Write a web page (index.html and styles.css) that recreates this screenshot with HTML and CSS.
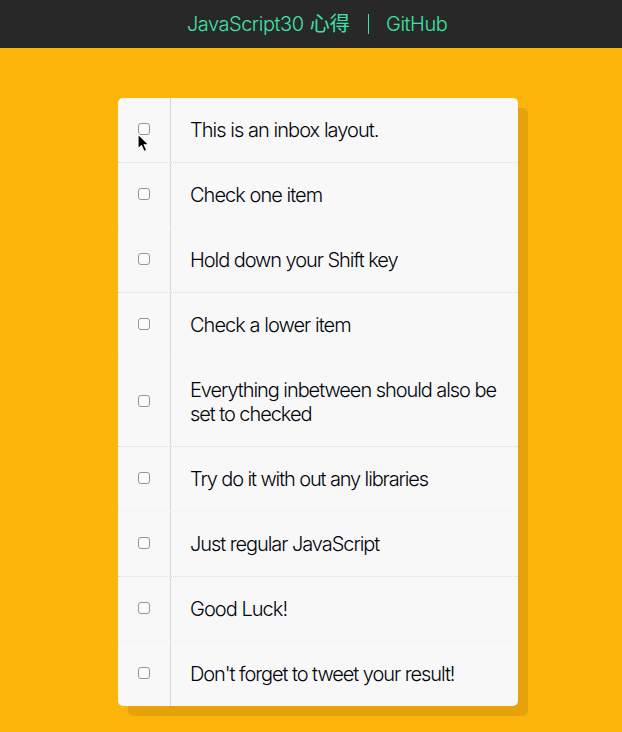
FILE: index.html
```html
<!DOCTYPE html>
<html lang="en">
<head>
<meta charset="utf-8">
<title>Hold Shift to Check Multiple Checkboxes</title>
<link rel="stylesheet" href="styles.css">
</head>
<body>
<header class="topbar"><a class="link-notes">JavaScript30 <span class="cjk">心得</span></a><span class="divider"></span><a class="link-github">GitHub</a></header>
<main class="inbox">
<label class="item"><input type="checkbox"><span class="text">This is an inbox layout.</span></label>
<label class="item"><input type="checkbox"><span class="text">Check one item</span></label>
<label class="item"><input type="checkbox"><span class="text snug">Hold down your Shift key</span></label>
<label class="item"><input type="checkbox"><span class="text">Check a lower item</span></label>
<label class="item"><input type="checkbox"><span class="text snug">Everything inbetween should also be set to checked</span></label>
<label class="item"><input type="checkbox"><span class="text tight">Try do it with out any libraries</span></label>
<label class="item"><input type="checkbox"><span class="text snug">Just regular JavaScript</span></label>
<label class="item"><input type="checkbox"><span class="text">Good Luck!</span></label>
<label class="item"><input type="checkbox"><span class="text snug">Don't forget to tweet your result!</span></label>
</main>
<svg class="cursor" width="13" height="20" viewBox="0 0 13 20"><path d="M1 1V16L4.5 12.8L7 18.5L9.8 17.3L7.3 11.8H12Z" fill="#000" stroke="#fff" stroke-width="1.2"/></svg>
</body>
</html>
```

FILE: styles.css
```css
* { box-sizing: border-box; }
body {
  margin: 0;
  min-height: 732px;
  background: #fdb50b;
  font-family: Inter, "Noto Sans CJK TC", sans-serif;
  font-weight: 300;
  font-size: 20px;
}
.topbar {
  height: 48px;
  display: flex;
  align-items: center;
  padding-left: 187px;
  background: #282828;
  color: #3fe3a8;
  line-height: 24px;
  letter-spacing: -0.48px;
  white-space: nowrap;
}
.cjk { margin-left: 1px; letter-spacing: 0; line-height: 1; font-weight: 400; }
.link-notes { width: 163px; height: 24px; }
.divider { width: 1px; height: 20px; margin: 0 17px 0 18px; background: #3fe3a8; }
.inbox {
  width: 400px;
  margin: 50px 0 0 118px;
  background: #f8f8f8;
  border-radius: 5px;
  box-shadow: 10px 10px 0 #e6a20a;
}
.item { display: flex; align-items: center; border-bottom: 1px dotted #dcdce0; }
.item:nth-child(even) { border-bottom-color: #f1f1f1; }
.item:last-child { border-bottom: 0; }
.item input {
  appearance: none;
  width: 12px;
  height: 12px;
  margin: 0 20px;
  border: 1px solid #969696;
  border-radius: 3px;
  background: #fbfbfb;
  position: relative;
  top: -1px;
}
.text {
  flex: 1;
  padding: 20px 20px 20px 19px;
  border-left: 1px solid #d1d8e8;
  line-height: 24px;
  letter-spacing: -0.96px;
  color: #02040c;
}
.snug { letter-spacing: -1.06px; }
.tight { letter-spacing: -1.12px; }
.cursor { position: absolute; left: 137px; top: 133px; }
```
